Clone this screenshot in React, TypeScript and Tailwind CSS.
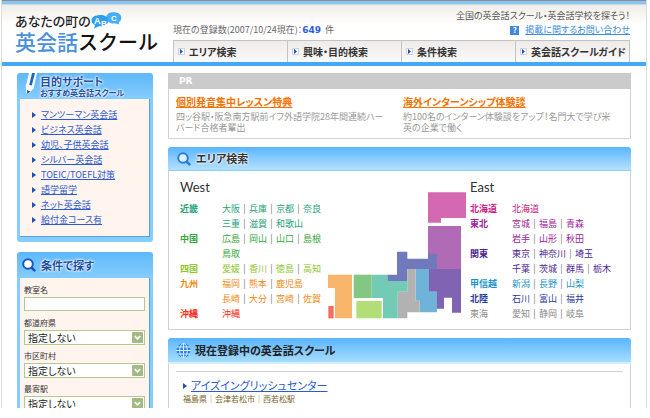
import { Fragment } from 'react';

type Region = {
  name: string;
  color: string;
  muted?: boolean;
  rows: string[][];
};

const navItems = ['エリア検索', '興味・目的検索', '条件検索', '英会話スクールガイド'];

const supportLinks = [
  'マンツーマン英会話',
  'ビジネス英会話',
  '幼児、子供英会話',
  'シルバー英会話',
  'TOEIC/TOEFL対策',
  '語学留学',
  'ネット英会話',
  '給付金コース有',
];

const searchSelects = [
  { id: 'pref', label: '都道府県' },
  { id: 'city', label: '市区町村' },
  { id: 'station', label: '最寄駅' },
];

const west: Region[] = [
  { name: '近畿', color: 'text-[#1fa37c]', rows: [['大阪', '兵庫', '京都', '奈良'], ['三重', '滋賀', '和歌山']] },
  { name: '中国', color: 'text-[#35a83c]', rows: [['広島', '岡山', '山口', '島根'], ['鳥取']] },
  { name: '四国', color: 'text-[#8fc832]', rows: [['愛媛', '香川', '徳島', '高知']] },
  { name: '九州', color: 'text-[#f08a14]', rows: [['福岡', '熊本', '鹿児島'], ['長崎', '大分', '宮崎', '佐賀']] },
  { name: '沖縄', color: 'text-[#fb2a14]', rows: [['沖縄']] },
];

const east: Region[] = [
  { name: '北海道', color: 'text-[#cf1a85]', rows: [['北海道']] },
  { name: '東北', color: 'text-[#9a2299]', rows: [['宮城', '福島', '青森'], ['岩手', '山形', '秋田']] },
  { name: '関東', color: 'text-[#4b1d91]', rows: [['東京', '神奈川', '埼玉'], ['千葉', '茨城', '群馬', '栃木']] },
  { name: '甲信越', color: 'text-[#1c93c8]', rows: [['新潟', '長野', '山梨']] },
  { name: '北陸', color: 'text-[#2b3a9c]', rows: [['石川', '富山', '福井']] },
  { name: '東海', color: 'text-[#8a8a8a]', muted: true, rows: [['愛知', '静岡', '岐阜']] },
];

const glow = '[text-shadow:0_0_2px_#fff,0_0_2px_#fff,0_0_3px_#fff]';

const Arrow = () => (
  <svg className="h-[6px] w-[4px] shrink-0" viewBox="0 0 4 6">
    <path d="M0 0 L4 3 L0 6 Z" fill="#1c4fb5" />
  </svg>
);

const Magnifier = ({ color, fill }: { color: string; fill: string }) => (
  <svg className="size-[14px] shrink-0" viewBox="0 0 14 14">
    <path d="M9 9 L12.4 12.4" stroke={color} strokeWidth="2.6" strokeLinecap="round" />
    <circle cx="6" cy="6" r="4.8" fill={fill} stroke={color} strokeWidth="2" />
  </svg>
);

const Globe = () => (
  <svg className="size-[15px] shrink-0" viewBox="0 0 15 15" fill="none">
    <circle cx="7.5" cy="7.5" r="7" fill="#2b83e0" />
    <g stroke="#d5edff" strokeWidth="1">
      <path d="M7.5 0 V15 M0 7.5 H15 M1 4 H14 M1 11 H14" />
      <ellipse cx="7.5" cy="7.5" rx="3.8" ry="7" />
    </g>
  </svg>
);

const Pencil = () => (
  <svg className="h-[22px] w-[12px] shrink-0" viewBox="0 0 12 22">
    <path d="M4 0 H12 L8.6 15.5 L3 21 L1 20 L0.8 13 Z" fill="#fff" />
    <path d="M7 0 H10 L6.8 12.5 L4.2 12 Z" fill="#1f66c4" />
    <path d="M2 17 L5.2 18.4 L2.2 21 Z" fill="#1d4ea0" />
  </svg>
);

const Bubbles = () => (
  <svg className="h-[17px] w-[31px]" viewBox="0 0 31 17">
    <path d="M20 0.5 C26 -0.5 30.5 2 30.3 6 C30.2 8.4 28.8 9.6 27.6 10.4 L28.6 12.6 L24.6 11.4 C20 12 15.5 10 15.2 6 C15 3 17 1 20 0.5 Z" fill="#45aef5" />
    <path d="M8.5 3 C14 2.6 17.5 5 17.2 9 C17 13 13 14.6 8 14.2 L3 16.6 L4 13 C1.4 11.8 0.2 10 0.5 7.8 C1 4.6 4.4 3.2 8.5 3 Z" fill="#2f9ff0" />
    <g fill="#fff" fontFamily="Liberation Sans" fontWeight="bold">
      <text x="3" y="12" fontSize="9">A</text>
      <text x="10" y="13.5" fontSize="8">B</text>
      <text x="20" y="9" fontSize="8">C</text>
    </g>
  </svg>
);

const JapanMap = () => (
  <svg className="mt-[13px] h-[127px] w-[138px] shrink-0" viewBox="24 37 414 381">
    <path d="M324 38 H438 V115 H363 V129 H324 Z" fill="#d468b2" />
    <path d="M324 139 H423 V268 H324 Z" fill="#b16ab5" />
    <path d="M327 268 H423 V399 H396 V354 H372 V387 H350 V336 H327 Z" fill="#8163b4" />
    <path d="M231 216 H262 V237 H324 V222 H351 V268 H262 V304 H202 V285 H231 Z" fill="#6f79bc" />
    <path d="M287 268 H327 V336 H351 V398 H299 V363 H287 Z" fill="#6fb3d8" />
    <path d="M262 268 H287 V363 H299 V398 H262 V416 H233 V336 H262 Z" fill="#b2b2b2" />
    <path d="M155 285 H202 V304 H262 V336 H233 V416 H189 V355 H155 Z" fill="#73cab5" />
    <path d="M101 285 H155 V355 H101 Z" fill="#82c884" />
    <path d="M109 364 H185 V416 H109 Z" fill="#b2de78" />
    <path d="M24 285 H96 V416 H45 V325 H24 Z" fill="#f8b66c" />
    <path d="M25 379 H41 V416 H25 Z" fill="#fb6a5e" />
  </svg>
);

const RegionList = ({ title, regions }: { title: string; regions: Region[] }) => (
  <div>
    <h3 className="mb-[6px] font-[Lato,sans-serif] text-[13px] leading-[16px] text-[#333]">{title}</h3>
    {regions.map((region) => (
      <div key={region.name} className={`grid grid-cols-[42px_1fr] leading-[15px] ${region.color}`}>
        <div className={region.muted ? '' : 'font-bold'}>{region.name}</div>
        <div>
          {region.rows.map((row) => (
            <div key={row[0]} className="whitespace-nowrap">
              {row.map((pref, i) => (
                <Fragment key={pref}>
                  {i > 0 && <span className="inline-block w-[9px] text-center text-[#777]">|</span>}
                  <a href="#">{pref}</a>
                </Fragment>
              ))}
            </div>
          ))}
        </div>
      </div>
    ))}
  </div>
);

const Header = () => (
  <header className="flex border-t border-b-4 border-t-[#8a8f96] border-b-[#42a8f8] bg-[linear-gradient(#8cc4f2_0,#8cc4f2_3px,#f1ede7_4px,#ffffff_24px)]">
    <a href="#" className="w-[171px] shrink-0 pt-[11px] pl-[13px]">
      <div className="flex h-[17px] items-start">
        <span className="pt-px text-[13px] leading-[16px] font-medium text-[#222]">あなたの町の</span>
        <Bubbles />
      </div>
      <div className="text-[21px] leading-[24px] font-medium whitespace-nowrap text-[#111] [font-feature-settings:normal]">
        <span className="text-[#4a90dc]">英会話</span>
        <span className="text-[20px]">スクール</span>
      </div>
    </a>
    <div className="mr-4 flex flex-1 flex-col">
      <p className="pt-2 text-right leading-[14px] text-[#555]">全国の英会話スクール・英会話学校を探そう！</p>
      <div className="mb-[3px] flex justify-between leading-[14px] text-[#666]">
        <p>
          現在の登録数(2007/10/24現在)：
          <b className="mr-1 font-['DejaVu_Sans'] text-[9px] text-[#2b5be0]">649</b>件
        </p>
        <div className="flex items-center gap-[6px]">
          <span className="flex size-[9px] items-center justify-center bg-[#3f87dd] text-[8px] font-bold text-white">?</span>
          <a href="#" className="text-[#3b8de0] underline">掲載に関するお問い合わせ</a>
        </div>
      </div>
      <nav className="grid grid-cols-4 border-t border-r border-[#c4c4c4] bg-linear-to-b from-[#efebea] to-[#fafafa]">
        {navItems.map((item) => (
          <a key={item} href="#" className="flex h-[21px] items-center gap-1 border-l border-[#c4c4c4] pl-1 text-[10px] font-bold whitespace-nowrap text-[#333]">
            <span className="flex size-[7px] items-center justify-center border border-[#c9d3e2] bg-white">
              <svg className="h-[5px] w-[3px]" viewBox="0 0 3 5">
                <path d="M0 0 L3 2.5 L0 5 Z" fill="#1c4fb5" />
              </svg>
            </span>
            {item}
          </a>
        ))}
      </nav>
    </div>
  </header>
);

const sidePanelBody = 'mx-[3px] border-r border-b border-[#5a9fd8] bg-[#fff4ee]';

const Sidebar = () => (
  <aside className="w-[136px] shrink-0 space-y-[10px]">
    <section className="rounded-[3px] bg-linear-to-b from-[#5db8fb] to-[#85cdfd] to-[26px] pb-[5px]">
      <div className="flex h-[26px] items-start gap-[3px] pl-[8px]">
        <Pencil />
        <h2 className={`pt-[2px] font-bold whitespace-nowrap text-[#1d4ea0] ${glow}`}>
          <span className="block text-[11px] leading-[13px]">目的サポート</span>
          <span className="block text-[8px] leading-[9px]">おすすめ英会話スクール</span>
        </h2>
      </div>
      <ul className={`${sidePanelBody} pt-2 pb-[9px] pl-[12px]`}>
        {supportLinks.map((link) => (
          <li key={link} className="flex items-center gap-[5px] leading-[15px]">
            <Arrow />
            <a href="#" className="text-[#2a5bd0] underline">{link}</a>
          </li>
        ))}
      </ul>
    </section>

    <section className="rounded-[3px] bg-linear-to-b from-[#5db8fb] to-[#85cdfd] to-[26px] pb-[5px]">
      <div className="flex h-[26px] items-center gap-[5px] pl-[5px]">
        <Magnifier color="#1a56c4" fill="#fff" />
        <h2 className={`text-[11px] font-bold text-[#1d4ea0] ${glow}`}>条件で探す</h2>
      </div>
      <form className={`${sidePanelBody} px-1 pt-[4px] pb-2 text-[8px] text-[#333]`}>
        <label htmlFor="school" className="block leading-[15px]">教室名</label>
        <input id="school" type="text" className="mb-px block h-[14px] w-full border border-[#b4c890] bg-white px-1 text-[10px]" />
        {searchSelects.map(({ id, label }) => (
          <div key={id}>
            <label htmlFor={id} className="block pt-[4px] leading-[14px]">{label}</label>
            <div className="relative">
              <select id={id} className="block h-[15px] w-full appearance-none border border-[#b4c890] bg-white pl-[3px] text-[10px] leading-[13px] text-[#222]">
                <option>指定しない</option>
              </select>
              <svg className="pointer-events-none absolute top-[2px] right-[2px] size-[11px]" viewBox="0 0 11 11">
                <rect width="11" height="11" rx="1" fill="#a3ba85" />
                <path d="M2.8 4 L5.5 6.8 L8.2 4" fill="none" stroke="#fff" strokeWidth="1.8" />
              </svg>
            </div>
          </div>
        ))}
      </form>
    </section>
  </aside>
);

const PrBox = () => (
  <section className="border border-t-0 border-[#d3d3d3]">
    <h2 className="-mx-px h-4 bg-[#cbcbcb] pl-[11px] font-['DejaVu_Sans'] text-[9px] leading-[16px] font-bold text-white">PR</h2>
    <div className="grid grid-cols-2 gap-x-[7px] px-[7px] pt-[5px] pb-[5px] text-[#999]">
      <div>
        <a href="#" className="block text-[10px] leading-[15px] font-bold text-[#f57200] underline">個別発音集中レッスン特典</a>
        <p className="pt-[2px] leading-[11px] whitespace-nowrap">
          四ッ谷駅・阪急南方駅前イフ外語学院28年間連続ハー<br />バード合格者輩出
        </p>
      </div>
      <div>
        <a href="#" className="block text-[10px] leading-[15px] font-bold text-[#f57200] underline">海外インターンシップ体験談</a>
        <p className="pt-[2px] leading-[11px] whitespace-nowrap">
          約100名のインターン体験談をアップ！名門大で学び米<br />英の企業で働く
        </p>
      </div>
    </div>
  </section>
);

const Main = () => (
  <main className="min-w-0 flex-1 space-y-2">
    <PrBox />

    <section>
      <div className="flex h-6 items-center gap-[5px] rounded-t-[3px] border-b border-[#8fcdf8] bg-linear-to-b from-[#57b5ff] to-[#b4e1ff] pl-[9px]">
        <Magnifier color="#2a7de0" fill="#dff1ff" />
        <h2 className={`text-[11px] font-bold text-[#333] ${glow}`}>エリア検索</h2>
      </div>
      <div className="flex border border-t-0 border-[#d3d3d3] pt-2 pb-[8px] pl-[11px]">
        <div className="w-[148px] shrink-0">
          <RegionList title="West" regions={west} />
        </div>
        <JapanMap />
        <div className="ml-1">
          <RegionList title="East" regions={east} />
        </div>
      </div>
    </section>

    <section>
      <div className="flex h-[26px] items-center gap-[4px] rounded-t-[3px] border-b-2 border-[#d4eeff] bg-linear-to-b from-[#57b5ff] to-[#a6dcff] pl-2">
        <Globe />
        <h2 className="text-[11px] font-bold text-[#222]">現在登録中の英会話スクール</h2>
      </div>
      <div className="border-x border-[#d3d3d3] px-[7px] pt-[7px] pb-10">
        <div className="border-t border-[#d0d0d0] pt-[5px] pl-[7px]">
          <div className="flex items-center gap-1">
            <Arrow />
            <a href="#" className="text-[11px] leading-[17px] text-[#2a5bd0] underline">アイズイングリッシュセンター</a>
          </div>
          <p className="text-[8px] leading-[9px] text-[#7a6228]">福島県｜会津若松市｜西若松駅</p>
        </div>
      </div>
    </section>
  </main>
);

const App = () => {
  return (
    <div className="h-screen bg-white pr-[3px] pb-[10px] pl-px font-['Noto_Sans_CJK_JP',sans-serif] text-[9px] [font-feature-settings:'palt']">
      <div className="h-full overflow-hidden border-x border-[#dcdcdc]">
        <Header />
        <div className="flex gap-[15px] px-[15px] pt-[7px]">
          <Sidebar />
          <Main />
        </div>
      </div>
    </div>
  );
};

export default App;
